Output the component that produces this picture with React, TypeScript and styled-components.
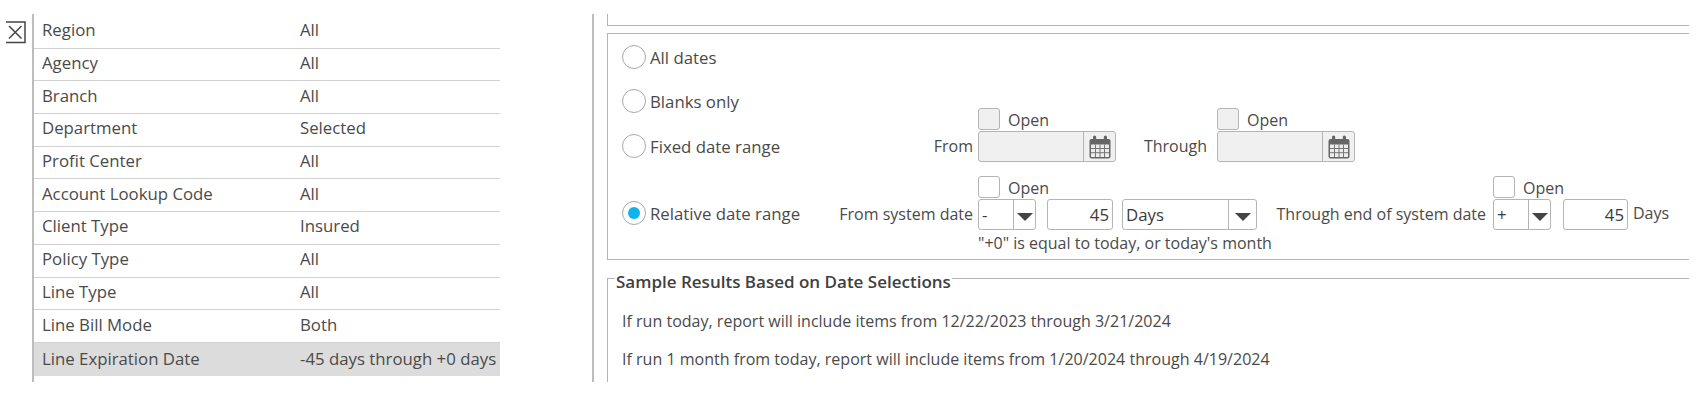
import React from "react";
import styled, { createGlobalStyle } from "styled-components";

const Global = createGlobalStyle`
  html, body { margin: 0; padding: 0; background: #fff; }
  body { font-family: "Open Sans", "Liberation Sans", sans-serif; font-size: 16.8px; color: #4a4a4a; }
`;
const Page = styled.div`
  width: 1696px; height: 406px; overflow: hidden; display: flex; align-items: flex-start;
  padding-top: 14px; box-sizing: border-box;
`;
const CloseCol = styled.div`width: 32px; flex: none; padding: 7px 0 0 6px; box-sizing: border-box;`;
const LeftPanel = styled.div`
  width: 468px; flex: none; height: 368px; border-left: 2px solid #bdbdbd; box-sizing: border-box; padding-top: 2px;
`;
const Row = styled.div<{ $active?: boolean }>`
  display: grid; grid-template-columns: 258px 1fr; height: 32.7px; box-sizing: border-box;
  align-items: center; padding: 0 0 ${p => (p.$active ? 2 : 4)}px 8px; white-space: nowrap;
  background: ${p => (p.$active ? "#dcdcdc" : "transparent")};
  border-bottom: ${p => (p.$active ? "none" : "1px solid #d2d2d2")};
`;
const RightPanel = styled.div`
  margin-left: 92px; width: 1104px; height: 368px; flex: none; border-left: 2px solid #bdbdbd;
  box-sizing: border-box; padding-left: 13px; overflow: hidden;
`;
const TopStub = styled.div`height: 12px; width: 1082px; box-sizing: border-box; border: 1px solid #b4b4b4; border-top: none; border-right: none;`;
const DateBox = styled.div`
  margin-top: 7px; width: 1082px; height: 227px; box-sizing: border-box; border: 1px solid #b4b4b4; border-right: none;
  padding-top: 11px;
`;
const OptionRow = styled.div<{ $top: number }>`display: flex; align-items: center; height: 24px; padding-left: 14px; margin-top: ${p => p.$top}px;`;
const Radio = styled.span<{ $on?: boolean }>`
  width: 24px; height: 24px; flex: none; border-radius: 50%; border: 1px solid #a8a8a8; box-sizing: border-box;
  display: flex; align-items: center; justify-content: center;
  &::after { content: ""; width: 12px; height: 12px; border-radius: 50%; background: ${p => (p.$on ? "#0db4ea" : "transparent")}; }
`;
const RadioLabel = styled.span`margin-left: 4px; white-space: nowrap;`;
const DateRow = styled.div<{ $top: number }>`display: flex; align-items: flex-end; height: 54px; padding-left: 14px; margin-top: ${p => p.$top}px;`;
const RadioGroup = styled.div<{ $w: number; $drop: number }>`display: flex; align-items: center; width: ${p => p.$w}px; flex: none; margin-bottom: ${p => p.$drop}px;`;
const FieldLabel = styled.span<{ $w: number; $pad: number }>`width: ${p => p.$w}px; flex: none; text-align: right; padding-right: ${p => p.$pad}px; box-sizing: border-box; white-space: nowrap; font-size: 16px; line-height: 31px;`;
const Stack = styled.div<{ $w: number }>`display: flex; flex-direction: column; flex: none; width: ${p => p.$w}px;`;
const OpenLine = styled.label`display: flex; align-items: flex-start; height: 23px; gap: 8px; font-size: 16px; line-height: 25px; white-space: nowrap;`;
const Check = styled.span<{ $disabled?: boolean }>`
  width: 22px; height: 22px; flex: none; box-sizing: border-box; border: 1px solid #b4b4b4; border-radius: 3px;
  background: ${p => (p.$disabled ? "#f0f0f0" : "#fff")};
`;
const InputShell = styled.div<{ $w: number; $disabled?: boolean }>`
  width: ${p => p.$w}px; height: 31px; box-sizing: border-box; border: 1px solid #b4b4b4; border-radius: 3px;
  display: flex; align-items: stretch; background: ${p => (p.$disabled ? "#f0f0f0" : "#fff")}; flex: none;
`;
const InputText = styled.span<{ $right?: boolean }>`
  flex: 1; display: flex; align-items: center; padding: 2px 3px 0; line-height: 1; color: #3a3a3a;
  justify-content: ${p => (p.$right ? "flex-end" : "flex-start")};
`;
const AddOn = styled.span<{ $w: number }>`
  width: ${p => p.$w}px; flex: none; border-left: 1px solid #b4b4b4; display: flex; align-items: center; justify-content: center;
`;
const Caret = styled.span`
  width: 0; height: 0; border-left: 8px solid transparent; border-right: 8px solid transparent; border-top: 8px solid #444;
  margin-top: 4px;
`;
const Note = styled.div`margin: 2px 0 0 370px; white-space: nowrap; font-size: 16px; line-height: 22px;`;
const Controls = styled.div<{ $gap: number; $left: number }>`display: flex; gap: ${p => p.$gap}px; margin-left: ${p => p.$left}px;`;
const Tail = styled.span`margin: 0 0 2px 5px; white-space: nowrap; font-size: 16px; line-height: 29px;`;
const Sample = styled.fieldset`
  margin: 2px 0 0; padding: 0 0 0 14px; width: 1082px; height: 120px; box-sizing: border-box;
  border: 1px solid #b4b4b4; border-right: none; border-bottom: none; min-inline-size: auto;
`;
const Legend = styled.legend`font-weight: 600; font-size: 17px; padding: 8px 1px 0; margin-left: -7px; line-height: 24px; color: #404040;`;
const SampleLine = styled.p`margin: 16px 0 0; line-height: 22px; white-space: nowrap; font-size: 16.05px;`;

const rows = [
  ["Region", "All"], ["Agency", "All"], ["Branch", "All"], ["Department", "Selected"], ["Profit Center", "All"],
  ["Account Lookup Code", "All"], ["Client Type", "Insured"], ["Policy Type", "All"], ["Line Type", "All"],
  ["Line Bill Mode", "Both"], ["Line Expiration Date", "-45 days through +0 days"],
];

const CloseIcon = () => (
  <svg width="20" height="23" viewBox="0 0 20 23" fill="none" stroke="#444" strokeWidth="1.5">
    <path d="M0 1H19V21.5H0" />
    <path d="M3 5L15.5 17.5M15.5 5L3 17.5" />
  </svg>
);
const CalendarIcon = () => (
  <svg width="24" height="26" viewBox="0 0 24 26">
    <rect x="1.5" y="5" width="21" height="19.5" rx="2" fill="#666" />
    <rect x="3" y="10.5" width="18" height="12.5" fill="#ececec" />
    <path d="M3 14.5H21M3 18.7H21M7.5 10.5V23M12 10.5V23M16.5 10.5V23" stroke="#777" strokeWidth="1" />
    <rect x="5" y="1.5" width="3.2" height="6.5" rx="1.6" fill="#666" />
    <rect x="15.8" y="1.5" width="3.2" height="6.5" rx="1.6" fill="#666" />
  </svg>
);
const DateField = () => (
  <Stack $w={138}>
    <OpenLine><Check $disabled />Open</OpenLine>
    <InputShell $w={138} $disabled><InputText /><AddOn $w={31}><CalendarIcon /></AddOn></InputShell>
  </Stack>
);
const Select = ({ w, add, v }: { w: number; add: number; v: string }) => (
  <InputShell $w={w}><InputText>{v}</InputText><AddOn $w={add}><Caret /></AddOn></InputShell>
);

export default function App() {
  return (
    <Page>
      <Global />
      <CloseCol><CloseIcon /></CloseCol>
      <LeftPanel>
        {rows.map(([k, v], i) => (
          <Row key={k} $active={i === rows.length - 1}><span>{k}</span><span>{v}</span></Row>
        ))}
      </LeftPanel>
      <RightPanel>
        <TopStub />
        <DateBox>
          <OptionRow $top={0}><Radio /><RadioLabel>All dates</RadioLabel></OptionRow>
          <OptionRow $top={20}><Radio /><RadioLabel>Blanks only</RadioLabel></OptionRow>
          <DateRow $top={-5}>
            <RadioGroup $w={250} $drop={4}><Radio /><RadioLabel>Fixed date range</RadioLabel></RadioGroup>
            <FieldLabel $w={106} $pad={5}>From</FieldLabel>
            <DateField />
            <FieldLabel $w={101} $pad={10}>Through</FieldLabel>
            <DateField />
          </DateRow>
          <DateRow $top={14}>
            <RadioGroup $w={200} $drop={5}><Radio $on /><RadioLabel>Relative date range</RadioLabel></RadioGroup>
            <FieldLabel $w={156} $pad={5}>From system date</FieldLabel>
            <Stack $w={58}>
              <OpenLine><Check />Open</OpenLine>
              <Select w={58} add={21} v="-" />
            </Stack>
            <Controls $gap={9} $left={11}>
              <InputShell $w={66}><InputText $right>45</InputText></InputShell>
              <Select w={135} add={27} v="Days" />
            </Controls>
            <FieldLabel $w={236} $pad={7}>Through end of system date</FieldLabel>
            <Stack $w={58}>
              <OpenLine><Check />Open</OpenLine>
              <Select w={58} add={21} v="+" />
            </Stack>
            <Controls $gap={0} $left={12}>
              <InputShell $w={65}><InputText $right>45</InputText></InputShell>
            </Controls>
            <Tail>Days</Tail>
          </DateRow>
          <Note>"+0" is equal to today, or today's month</Note>
        </DateBox>
        <Sample>
          <Legend>Sample Results Based on Date Selections</Legend>
          <SampleLine>If run today, report will include items from 12/22/2023 through 3/21/2024</SampleLine>
          <SampleLine>If run 1 month from today, report will include items from 1/20/2024 through 4/19/2024</SampleLine>
        </Sample>
      </RightPanel>
    </Page>
  );
}
